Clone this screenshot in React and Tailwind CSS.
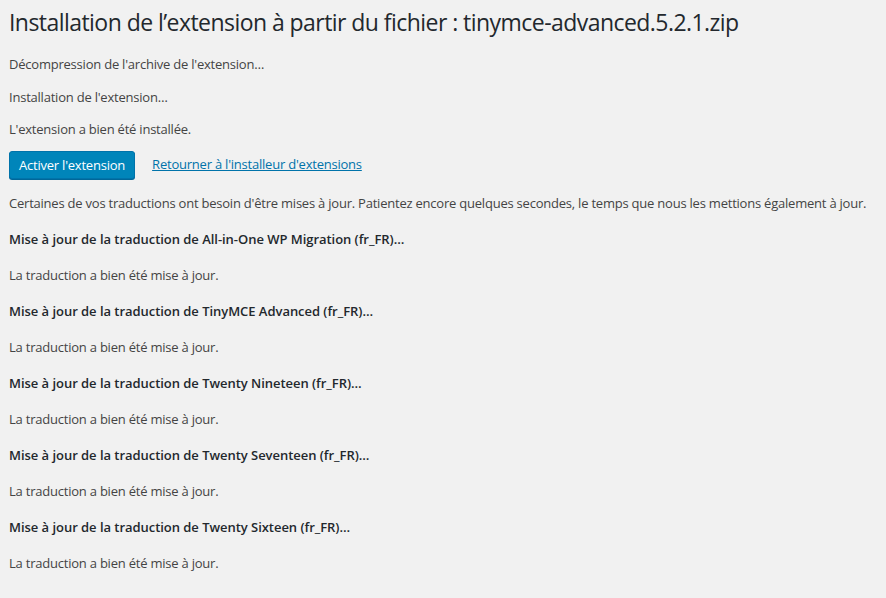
import React from "react";

const translations = [
  "All-in-One WP Migration",
  "TinyMCE Advanced",
  "Twenty Nineteen",
  "Twenty Seventeen",
  "Twenty Sixteen",
];

const App = () => {
  return (
    <div
      className="min-h-[598px] bg-[#f1f1f1] pl-[9px] text-[13px] tracking-[-0.22px] text-[#444]"
      style={{ fontFamily: '"Open Sans", "Noto Sans", sans-serif' }}
    >
      <h1 className="pt-[8px] text-[23px] leading-[29px] font-normal tracking-[-0.55px] text-[#23282d]">
        Installation de l’extension à partir du fichier : tinymce-advanced.5.2.1.zip
      </h1>
      <p className="mt-[17px] leading-[20px]">Décompression de l'archive de l'extension…</p>
      <p className="mt-[13px] leading-[20px]">Installation de l'extension…</p>
      <p className="mt-[12px] leading-[20px]">L'extension a bien été installée.</p>

      <div className="mt-[12px] flex items-center gap-[17px]">
        <button className="h-[28px] rounded-[3px] border border-[#0073aa] bg-[#0085ba] px-[9px] leading-[26px] text-white shadow-[0_1px_0_#006799]">
          Activer l'extension
        </button>
        <a href="#" className="text-[#0073aa] underline">
          Retourner à l'installeur d'extensions
        </a>
      </div>

      <p className="mt-[14px] whitespace-nowrap leading-[20px]">
        Certaines de vos traductions ont besoin d'être mises à jour. Patientez encore quelques secondes, le temps que nous les mettions également à jour.
      </p>

      <div className="mt-[16px] flex flex-col gap-[16px]">
        {translations.map((name) => (
          <React.Fragment key={name}>
            <p className="leading-[20px] font-semibold tracking-[-0.04px] text-[#23282d]">
              Mise à jour de la traduction de {name} (fr_FR)…
            </p>
            <p className="leading-[20px]">La traduction a bien été mise à jour.</p>
          </React.Fragment>
        ))}
      </div>
    </div>
  );
};

export default App;
